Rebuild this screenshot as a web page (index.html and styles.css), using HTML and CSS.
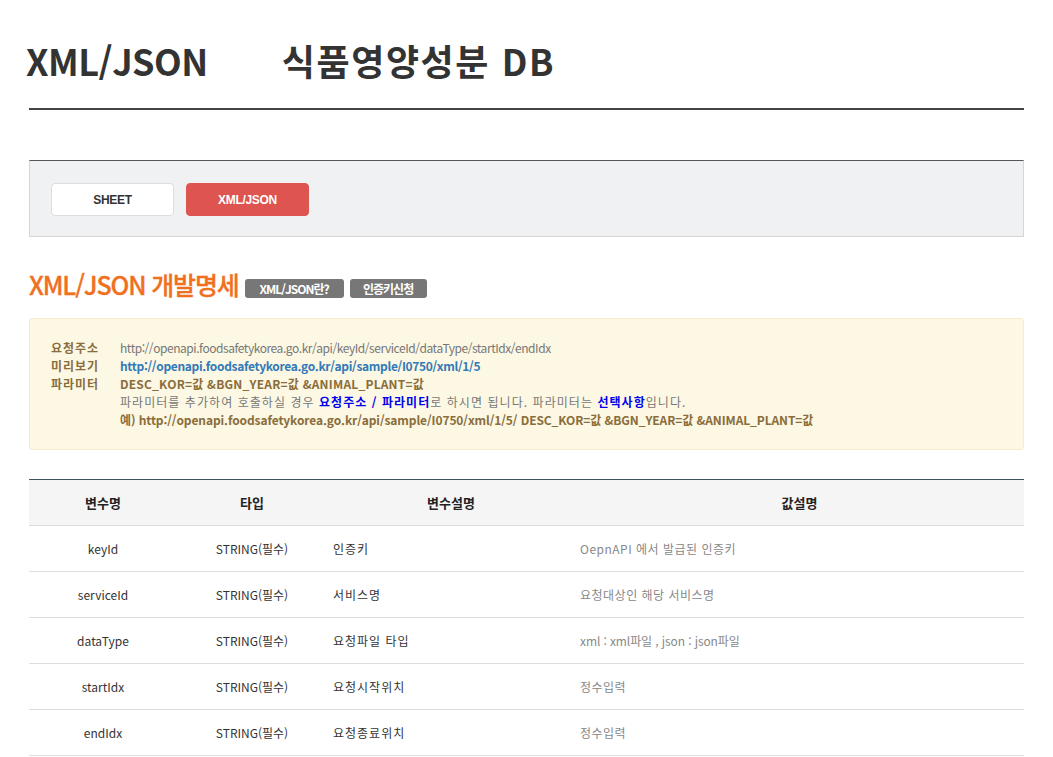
FILE: index.html
```html
<!DOCTYPE html>
<html lang="ko">
<head>
<meta charset="utf-8">
<title>XML/JSON 식품영양성분 DB</title>
<link rel="stylesheet" href="styles.css">
</head>
<body>
<div class="page">
  <h1 class="page-title"><span class="t-first">XML/JSON</span><span class="t-second">식품영양성분 DB</span></h1>

  <div class="tabbox">
    <button class="tab">SHEET</button>
    <button class="tab tab-active">XML/JSON</button>
  </div>

  <div class="section-head">
    <h2 class="section-title">XML/JSON 개발명세</h2>
    <span class="badge">XML/JSON란?</span>
    <span class="badge">인증키신청</span>
  </div>

  <div class="info">
    <div class="info-label">요청주소</div>
    <div class="info-val muted l1">http://openapi.foodsafetykorea.go.kr/api/keyId/serviceId/dataType/startIdx/endIdx</div>
    <div class="info-label">미리보기</div>
    <div class="info-val l2"><a class="link">http://openapi.foodsafetykorea.go.kr/api/sample/I0750/xml/1/5</a></div>
    <div class="info-label">파라미터</div>
    <div class="info-val strong l3">DESC_KOR=값 &amp;BGN_YEAR=값 &amp;ANIMAL_PLANT=값</div>
    <div class="info-val muted col2 l4">파라미터를 추가하여 호출하실 경우 <b class="hl">요청주소 / 파라미터</b>로 하시면 됩니다. 파라미터는 <b class="hl">선택사항</b>입니다.</div>
    <div class="info-val strong col2 l5">예) http://openapi.foodsafetykorea.go.kr/api/sample/I0750/xml/1/5/ DESC_KOR=값 &amp;BGN_YEAR=값 &amp;ANIMAL_PLANT=값</div>
  </div>

  <table class="spec">
    <thead>
      <tr>
        <th class="c1">변수명</th>
        <th class="c2">타입</th>
        <th class="c3">변수설명</th>
        <th class="c4">값설명</th>
      </tr>
    </thead>
    <tbody>
      <tr><td class="c1">keyId</td><td class="c2">STRING(필수)</td><td class="c3">인증키</td><td class="c4">OepnAPI 에서 발급된 인증키</td></tr>
      <tr><td class="c1">serviceId</td><td class="c2">STRING(필수)</td><td class="c3">서비스명</td><td class="c4">요청대상인 해당 서비스명</td></tr>
      <tr><td class="c1">dataType</td><td class="c2">STRING(필수)</td><td class="c3">요청파일 타입</td><td class="c4 latin">xml : xml파일 , json : json파일</td></tr>
      <tr><td class="c1">startIdx</td><td class="c2">STRING(필수)</td><td class="c3">요청시작위치</td><td class="c4">정수입력</td></tr>
      <tr><td class="c1">endIdx</td><td class="c2">STRING(필수)</td><td class="c3">요청종료위치</td><td class="c4">정수입력</td></tr>
    </tbody>
  </table>
</div>
</body>
</html>
```

FILE: styles.css
```css
html, body {
  margin: 0;
  padding: 0;
  background: #fff;
}
body {
  font-family: "Noto Sans CJK KR", "Noto Sans", sans-serif;
  color: #333;
  font-size: 12px;
}
.page {
  margin-left: 29px;
  width: 995px;
}
.page-title {
  margin: 0;
  padding-top: 36px;
  padding-bottom: 24px;
  border-bottom: 2px solid #444;
  font-size: 36px;
  line-height: 48px;
  font-weight: 700;
  color: #333;
  letter-spacing: -0.5px;
}
.t-first {
  margin-left: -3px;
}
.t-second {
  margin-left: 74px;
  letter-spacing: 1.6px;
}
.tabbox {
  margin-top: 50px;
  background: #f0f1f3;
  border: 1px solid #d6d6d6;
  border-top: 1px solid #555;
  padding: 22px 20px 20px 21px;
  display: flex;
  gap: 12px;
}
.tab {
  width: 123px;
  height: 33px;
  border: 1px solid #dddddd;
  border-radius: 4px;
  background: #fff;
  font-family: "Liberation Sans", Arial, sans-serif;
  font-weight: 700;
  font-size: 12px;
  color: #333;
  padding: 0;
  letter-spacing: -0.3px;
}
.tab-active {
  background: #dd5450;
  border-color: #dd5450;
  color: #fff;
}
.section-head {
  margin-top: 30px;
  display: flex;
  align-items: flex-end;
  gap: 6px;
}
.section-title {
  margin: 0;
  font-size: 25px;
  line-height: 34px;
  font-weight: 500;
  color: #f0701e;
  letter-spacing: -1.15px;
  -webkit-text-stroke: 0.3px #f0701e;
}
.badge {
  display: inline-flex;
  align-items: center;
  justify-content: center;
  height: 19px;
  width: 99px;
  margin-bottom: 3px;
  background: #777;
  border-radius: 3px;
  color: #fff;
  font-weight: 700;
  font-size: 12px;
  letter-spacing: -1px;
}
.badge + .badge {
  width: 77px;
}
.info {
  margin-top: 17px;
  background: #fcf8e4;
  border: 1px solid #f5ecd0;
  border-radius: 3px;
  padding: 20px 20px 20px 21px;
  display: grid;
  grid-template-columns: 69px 1fr;
  line-height: 18px;
  font-size: 12px;
  color: #8a6d3b;
}
.info-label {
  font-weight: 700;
  color: #8a6d3b;
  letter-spacing: 1px;
}
.info-val.col2 {
  grid-column: 2;
}
.l1 { letter-spacing: -0.45px; }
.l2 { letter-spacing: -0.33px; }
.l3 { letter-spacing: 0.2px; }
.l4 { letter-spacing: 1.05px; }
.l5 { letter-spacing: -0.1px; }
.muted {
  color: #777;
}
.strong {
  font-weight: 700;
}
.link {
  color: #337ab7;
  font-weight: 700;
  text-decoration: none;
}
.hl {
  color: #0000ee;
}
.spec {
  margin-top: 29px;
  width: 995px;
  border-collapse: collapse;
  border-top: 1px solid #3d5560;
  table-layout: fixed;
}
.spec th {
  height: 45px;
  background: #f5f5f5;
  font-size: 13px;
  font-weight: 700;
  color: #222;
  border-bottom: 1px solid #ddd;
  padding: 0;
  text-align: center;
}
.spec td {
  height: 45px;
  border-bottom: 1px solid #ddd;
  padding: 0;
  font-size: 12px;
  color: #333;
}
.spec .c1 { width: 148px; text-align: center; }
.spec .c2 { width: 150px; text-align: center; }
.spec .c3 { width: 248px; }
.spec td.c3 { padding-left: 6px; letter-spacing: 1px; }
.spec td.c4 { padding-left: 5px; color: #888; letter-spacing: 0.5px; }
.spec td.c4.latin { letter-spacing: -0.1px; }
```
